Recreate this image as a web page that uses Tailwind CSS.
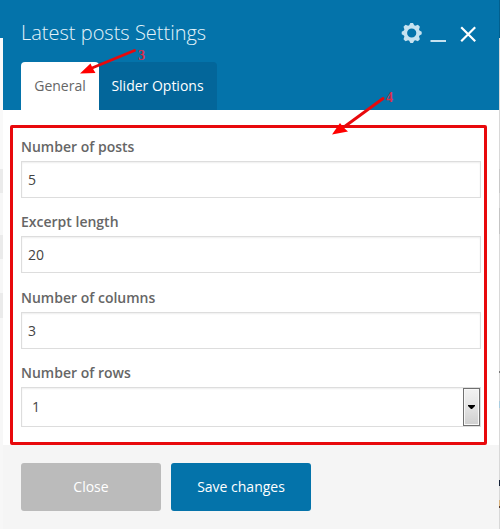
<!DOCTYPE html>
<html lang="en">
<head>
<meta charset="utf-8">
<title>Latest posts Settings</title>
<script src="https://cdn.jsdelivr.net/npm/@tailwindcss/browser@4"></script>
</head>
<body class="relative flex h-[529px] w-[500px] overflow-hidden bg-[#f5f5f5] font-['Open_Sans',sans-serif] text-[14px]">
  <!-- page behind the dialog, left edge -->
  <div class="flex w-[3px] shrink-0 flex-col bg-[#f7f7f7]">
    <div class="h-[38px] bg-[#0473aa]"></div>
    <div class="h-[131px] bg-[#f9f9f9]"></div>
    <div class="h-[24px] bg-[#ebebeb]"></div>
    <div class="h-[42px]"></div>
    <div class="h-[24px] bg-[#ebebeb]"></div>
    <div class="h-[34px]"></div>
    <div class="h-[25px] bg-[#ebebeb]"></div>
  </div>

  <main class="flex w-[496px] shrink-0 flex-col bg-white">
    <header class="flex h-[110px] shrink-0 flex-col justify-between bg-[#0473aa] pl-[18px]">
      <div class="flex h-[62px] items-center pt-[4px]">
        <h1 class="w-[380px] text-[20px] font-light leading-[28px] text-[#e4f3fa]"><span>Latest posts Settings</span></h1>
        <svg class="block h-[22px] w-[80px]" viewBox="0 0 80 22" fill="none">
          <g transform="translate(10.7 11)" fill="#c6e2f0">
            <path fill-rule="evenodd" d="M-1.3-10h2.6l1.2 2.2 1.1.5L6.2-8.2 8.2-6.2 7.3-3.6l.5 1.1L10-1.3v2.6L7.8 2.5l-.5 1.1L8.2 6.2 6.2 8.2 3.6 7.3l-1.1.5L1.3 10h-2.6l-1.2-2.2-1.1-.5L-6.2 8.2-8.2 6.2-7.3 3.6l-.5-1.1L-10 1.3v-2.6l2.2-1.2.5-1.1L-8.2-6.2-6.2-8.2-3.6-7.3l1.1-.5zM0-4.6a4.6 4.6 0 1 0 0 9.2 4.6 4.6 0 0 0 0-9.2z"/>
          </g>
          <path d="M29.5 19h15.5" stroke="#c6e2f0" stroke-width="2"/>
          <path d="M60.200 5.300l14 14M74.200 5.300L60.200 19.300" stroke="#fff" stroke-width="2.2"/>
        </svg>
      </div>
      <nav class="flex h-[48px]">
        <span class="flex w-[78px] items-center justify-center rounded-t-[4px] bg-white pb-[2px] text-[#666]"><span>General</span></span>
        <span class="flex w-[118px] items-center justify-center rounded-tr-[4px] bg-[#03669a] pb-[2px] pr-px text-white"><span>Slider Options</span></span>
      </nav>
    </header>

    <form class="flex h-[335px] shrink-0 flex-col pl-[18px] pt-[27px] leading-[20px] text-[#444]">
      <div class="h-[75px]">
        <div class="h-[24px] font-semibold text-[#666]"><span>Number of posts</span></div>
        <div class="flex h-[37px] w-[460px] items-center border border-[#ddd] pl-[6px] shadow-[inset_0_1px_2px_rgba(0,0,0,0.07)]"><span>5</span></div>
      </div>
      <div class="h-[76px]">
        <div class="h-[24px] font-semibold text-[#666]"><span>Excerpt length</span></div>
        <div class="flex h-[37px] w-[460px] items-center border border-[#ddd] pl-[6px] shadow-[inset_0_1px_2px_rgba(0,0,0,0.07)]"><span>20</span></div>
      </div>
      <div class="h-[75px]">
        <div class="h-[24px] font-semibold text-[#666]"><span>Number of columns</span></div>
        <div class="flex h-[37px] w-[460px] items-center border border-[#ddd] pl-[6px] shadow-[inset_0_1px_2px_rgba(0,0,0,0.07)]"><span>3</span></div>
      </div>
      <div>
        <div class="h-[24px] font-semibold text-[#666]"><span>Number of rows</span></div>
        <div class="flex h-[40px] w-[460px] items-center justify-between border border-[#ddd] pl-[10px] shadow-[inset_0_1px_2px_rgba(0,0,0,0.07)]">
          <span>1</span>
          <div class="flex h-[38px] w-[17px] items-center justify-center border border-[#707070] bg-linear-to-b from-[#f2f2f2] via-[#e4e4e4] to-[#cfcfcf] shadow-[inset_0_0_0_1px_#f8f8f8]">
            <svg class="block h-[4px] w-[7px]" viewBox="0 0 7 4"><path d="M0 0h7v1L4 4H3L0 1z" fill="#000"/></svg>
          </div>
        </div>
      </div>
    </form>

    <footer class="flex h-[84px] gap-[10px] bg-[#f5f5f5] pl-[18px] pt-[18px] text-white">
      <span class="flex h-[48px] w-[140px] items-center justify-center rounded-[3px] bg-[#bbb] pb-[2px]"><span>Close</span></span>
      <span class="flex h-[48px] w-[140px] items-center justify-center rounded-[3px] bg-[#0473aa] pb-[2px]"><span>Save changes</span></span>
    </footer>
  </main>

  <!-- page behind the dialog, right edge -->
  <div class="flex w-px shrink-0 flex-col bg-[#d8d8d8]">
    <div class="h-[38px] bg-[#035f8d]"></div>
    <div class="h-[131px]"></div>
    <div class="h-[24px] bg-[#c8c8c8]"></div>
    <div class="h-[15px]"></div>
    <div class="h-[26px] bg-[#c4c4c4]"></div>
    <div class="h-[137px]"></div>
    <div class="h-[2px] bg-[#777]"></div>
    <div class="h-[28px]"></div>
    <div class="h-[7px] bg-[#a9cde0]"></div>
    <div class="h-[72px]"></div>
    <div class="h-[6px] bg-[#152238]"></div>
    <div class="h-[14px]"></div>
    <div class="h-[6px] bg-[#d8b27c]"></div>
    <div class="h-[2px] bg-[#5a4030]"></div>
  </div>

  <!-- annotations -->
  <div class="absolute left-[10px] top-[125px] h-[320px] w-[477px] rounded-[2px] border-3 border-[#e8090c]"></div>
  <svg class="absolute left-0 top-0 block" width="500" height="150" viewBox="0 0 500 150">
    <g stroke="#e8090c" stroke-width="2.9" stroke-linecap="round">
      <path d="M134.5 50.5L92 68"/>
      <path d="M383 98.5L344 127"/>
    </g>
    <path d="M80 73.5L90.5 63.5L92.5 68L95.5 73zM332 134.5L340 123L343.5 127.5L348 131.5z" fill="#ff0000"/>
  </svg>
  <span class="absolute left-[138px] top-[49px] font-['Liberation_Serif',serif] text-[14px] font-bold leading-[14px] text-[#d8304a]">3</span>
  <span class="absolute left-[386px] top-[91px] font-['Liberation_Serif',serif] text-[14px] font-bold leading-[14px] text-[#d8304a]">4</span>
</body>
</html>
